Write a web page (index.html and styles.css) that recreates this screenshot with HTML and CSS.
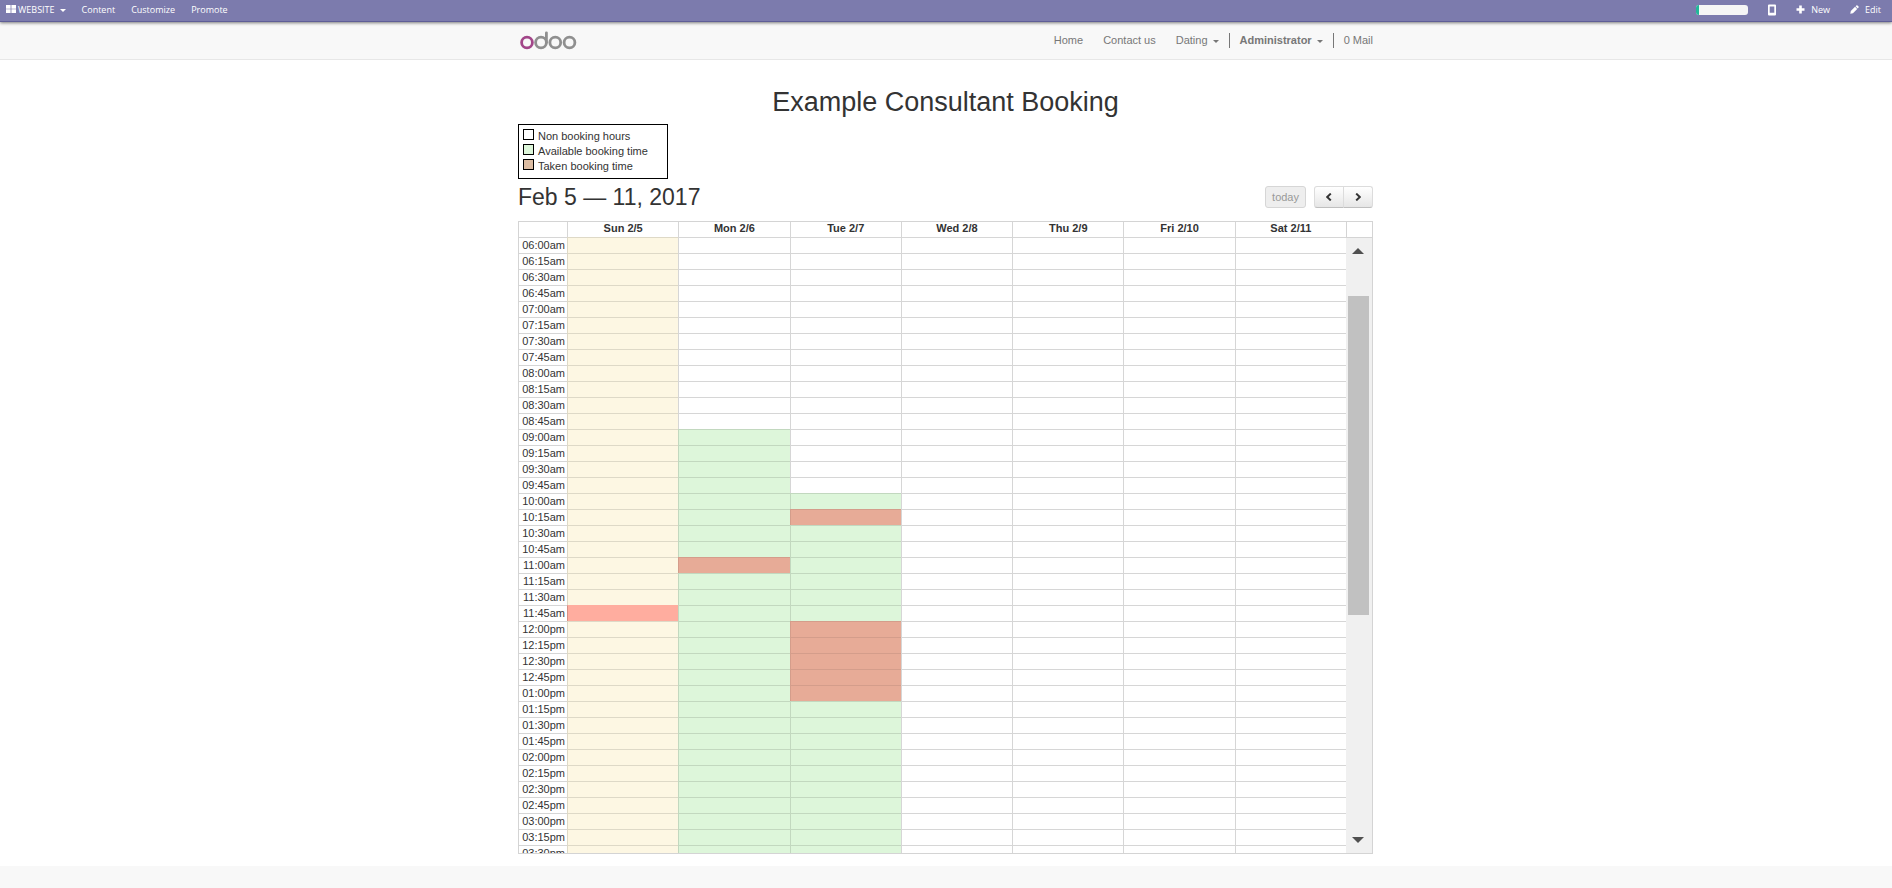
FILE: index.html
```html
<!DOCTYPE html>
<html lang="en">
<head>
<meta charset="utf-8">
<title>Example Consultant Booking</title>
<link rel="stylesheet" href="styles.css">
</head>
<body>
<nav class="topbar" aria-label="Website editor">
  <ul class="topbar-list">
    <li><a href="#" class="topbar-brand"><svg class="icon-grid" viewBox="0 0 10 8" aria-hidden="true"><path d="M0 0h4.6v3.7H0zM5.4 0H10v3.7H5.4zM0 4.3h4.6V8H0zM5.4 4.3H10V8H5.4z"/></svg>WEBSITE<span class="caret"></span></a></li>
    <li><a href="#">Content</a></li>
    <li><a href="#">Customize</a></li>
    <li><a href="#">Promote</a></li>
  </ul>
  <ul class="topbar-list topbar-actions">
    <li class="progress"><span class="progress-bar"></span></li>
    <li><button type="button" aria-label="Mobile preview"><svg class="icon-mobile" viewBox="0 0 8 12" aria-hidden="true"><path fill-rule="evenodd" d="M1 .5h6q1 0 1 1v9q0 1-1 1H1q-1 0-1-1v-9q0-1 1-1zM1.7 2.4v6.400h4.600v-6.400z"/></svg></button></li>
    <li><button type="button"><svg class="icon" viewBox="0 0 9 9" aria-hidden="true"><path d="M3.2.5h2.6v2.7h2.7v2.6H5.800v2.700H3.200V5.800H.5V3.200h2.700z"/></svg>New</button></li>
    <li><button type="button"><svg class="icon" viewBox="0 0 10 10" aria-hidden="true"><path d="M.3 9.700l.6-3L5.600 2l2.400 2.400L3.300 9.100zM6.200 1.400l.9-.9q.6-.5 1.200 0L9.500 1.700q.5.600 0 1.200l-.9.900z"/></svg>Edit</button></li>
  </ul>
</nav>

<header class="site-header">
  <div class="container header-row">
    <a href="#" class="logo" aria-label="odoo">
      <svg viewBox="0 0 57 19" fill="none" stroke-width="2.800">
        <g stroke="#8f8f8f"><circle cx="21" cy="11.500" r="5.400"/><path d="M26.400 11.500V1.800" stroke-linecap="round"/><circle cx="35.300" cy="11.500" r="5.400"/><circle cx="49.500" cy="11.500" r="5.400"/></g>
        <circle cx="7" cy="11.500" r="5.400" stroke="#a24689"/>
      </svg>
    </a>
    <nav aria-label="Main">
      <ul class="menu">
        <li><a href="#">Home</a></li>
        <li><a href="#">Contact us</a></li>
        <li><a href="#">Dating<span class="caret"></span></a></li>
        <li class="divided"><a href="#" class="user">Administrator<span class="caret"></span></a></li>
        <li class="divided"><a href="#">0 Mail</a></li>
      </ul>
    </nav>
  </div>
</header>

<main class="main">
  <h1>Example Consultant Booking</h1>
  <ul class="legend">
    <li><span class="swatch"></span>Non booking hours</li>
    <li><span class="swatch swatch-open"></span>Available booking time</li>
    <li><span class="swatch swatch-taken"></span>Taken booking time</li>
  </ul>
  <div class="toolbar">
    <h2>Feb 5 — 11, 2017</h2>
    <div class="toolbar-buttons">
      <button type="button" class="btn btn-today" disabled>today</button>
      <div class="btn-group">
        <button type="button" class="btn btn-step" aria-label="Previous week"><svg viewBox="0 0 6 8" aria-hidden="true"><path d="M4.800.6L1.200 4l3.600 3.400"/></svg></button>
        <button type="button" class="btn btn-step" aria-label="Next week"><svg viewBox="0 0 6 8" aria-hidden="true"><path d="M1.200.6L4.800 4 1.200 7.400"/></svg></button>
      </div>
    </div>
  </div>
  <section class="calendar" aria-label="Week">
    <div class="viewport">
      <table class="slots">
        <thead>
          <tr><th class="axis"></th><th>Sun 2/5</th><th>Mon 2/6</th><th>Tue 2/7</th><th>Wed 2/8</th><th>Thu 2/9</th><th>Fri 2/10</th><th>Sat 2/11</th></tr>
        </thead>
        <tbody id="slots"></tbody>
      </table>
    </div>
    <div class="scroll-column">
      <div class="scroll-head"></div>
      <div class="scrollbar">
        <span class="arrow arrow-up"></span>
        <span class="thumb"></span>
        <span class="arrow arrow-down"></span>
      </div>
    </div>
  </section>
</main>
<script src="calendar.js"></script>
</body>
</html>
```
FILE: styles.css
```css
* { box-sizing: border-box; }

body {
  margin: 0;
  min-height: 100vh;
  background: #f8f8f8;
  color: #333;
  font: 11px/15px "Liberation Sans", Arial, sans-serif;
}

h1, h2, ul { margin: 0; padding: 0; font-weight: 400; }
ul { list-style: none; }
a { color: inherit; text-decoration: none; }
button { font: inherit; color: inherit; }

.container {
  width: 100%;
  max-width: 880px;
  margin: 0 auto;
  padding: 0 12px;
}

.caret {
  display: inline-block;
  margin-left: 5px;
  border: 3px solid transparent;
  border-top-color: currentColor;
  border-bottom: 0;
  vertical-align: middle;
}

.topbar {
  position: relative;
  display: flex;
  justify-content: space-between;
  height: 22px;
  padding: 0 11px 0 6px;
  border-bottom: 1px solid #5f5e97;
  background: #7c7bad;
  box-shadow: 0 1px 3px rgba(0, 0, 0, .5);
  color: #fff;
  font: 600 9px/19px "Open Sans", "Noto Sans", sans-serif;
}
.topbar-list { display: flex; gap: 16px; }
.topbar-brand { font-weight: 400; }
.topbar-actions { gap: 20px; align-items: center; height: 19px; }
.topbar button {
  display: flex;
  align-items: center;
  padding: 0;
  border: 0;
  background: none;
}
.topbar svg { fill: #fff; }
.icon-grid { width: 10px; height: 8px; margin-right: 2px; }
.icon-mobile { width: 8px; height: 12px; }
.icon { width: 9px; height: 9px; margin-right: 6px; }
.progress {
  display: flex;
  width: 52px;
  height: 10px;
  overflow: hidden;
  border-radius: 3px;
  background: #f5f5f5;
}
.progress-bar { width: 3px; background: #21b799; }

.site-header { border-bottom: 1px solid #e7e7e7; }
.header-row {
  display: flex;
  justify-content: space-between;
  align-items: center;
  height: 37px;
}
.logo svg { display: block; width: 57px; height: 19px; margin-left: 2px; }
.menu { display: flex; color: #777; }
.menu a { display: block; padding: 0 10px; }
.menu li:last-child a { padding-right: 1px; }
.divided { border-left: 1px solid #777; }
.user { font-weight: 700; }

.main {
  padding: 26px calc(50% - 427px) 12px calc(50% - 428px);
  background: #fff;
}
h1 { font-size: 27px; line-height: 32px; text-align: center; }

.legend {
  width: 150px;
  margin-top: 6px;
  padding: 4px;
  border: 1px solid #000;
}
.legend li { display: flex; align-items: center; gap: 4px; height: 15px; }
.swatch { width: 11px; height: 11px; margin-bottom: 4px; border: 1px solid #000; }
.swatch-open { background: #ddf6da; }
.swatch-taken { background: #ddbda3; }

.toolbar {
  display: flex;
  justify-content: space-between;
  align-items: center;
  height: 42px;
}
h2 { font-size: 23px; line-height: 26px; margin-bottom: 6px; }
.toolbar-buttons { display: flex; gap: 8px; margin-bottom: 6px; }
.btn-group { display: flex; }
.btn {
  height: 22px;
  padding: 0 6px;
  border: 1px solid #ccc;
  border-color: #dcdcdc #dcdcdc #bfbfbf;
  border-radius: 3px;
  background: linear-gradient(#fff, #e6e6e6);
}
.btn-today { background: #eee; color: #999; border-color: #d6d6d6; }
.btn-step { display: flex; align-items: center; justify-content: center; width: 30px; }
.btn-step:first-child { border-radius: 3px 0 0 3px; }
.btn-step:last-child { margin-left: -1px; border-radius: 0 3px 3px 0; }
.btn-step svg { width: 6px; height: 8px; fill: none; stroke: #333; stroke-width: 2; }

.calendar { display: flex; height: 633px; border: 1px solid #d4d4d4; }
.viewport { flex: 1; overflow: hidden; }
.slots {
  width: 100%;
  table-layout: fixed;
  border-spacing: 0;
}
.slots th, .slots td {
  height: 16px;
  padding: 0;
  border-left: 1px solid rgba(0, 0, 0, .16);
  border-top: 1px solid rgba(0, 0, 0, .16);
}
.slots thead th { height: 15px; border-top: 0; line-height: 13px; vertical-align: top; }
.slots tr th:first-child { border-left: 0; }
.slots .axis { width: 48px; }
.slots tbody th {
  padding-right: 2px;
  font-weight: 400;
  line-height: 15px;
  text-align: right;
}
.slots .today { background: #fdf7e3; border-color: rgba(0, 0, 0, .12); }
.slots .open { background: #ddf6da; border-color: rgba(0, 0, 0, .12); }
.slots .taken { background: #e7ab97; border-color: rgba(0, 0, 0, .08); }
.slots .taken-today { background: #ffad9f; border-top-color: transparent; }

.scroll-column { display: flex; flex-direction: column; width: 26px; }
.scroll-head {
  height: 16px;
  border-left: 1px solid #d4d4d4;
  border-bottom: 1px solid #d4d4d4;
}
.scrollbar {
  display: flex;
  flex: 1;
  flex-direction: column;
  align-items: center;
  padding: 10px 3px 10px 1px;
  background: #f0f0f0;
}
.arrow { border: 6px solid transparent; }
.arrow-up { border-top: 0; border-bottom-color: #505050; }
.arrow-down { margin-top: auto; border-bottom: 0; border-top-color: #505050; }
.thumb { width: 21px; height: 319px; margin-top: 42px; background: #c1c1c1; }
```
FILE: calendar.js
```js
// Quarter-hour slots, counted in minutes from midnight.
const START = 6 * 60, STEP = 15, ROWS = 39;
const open = [null, [540, 1440], [600, 1440]];
const taken = [[[705, 720]], [[660, 675]], [[615, 630], [720, 795]]];
const within = (t, range) => t >= range[0] && t < range[1];

function slotClass(day, t) {
  const busy = (taken[day] || []).some(range => within(t, range));
  if (busy) return day === 0 ? 'taken-today' : 'taken';
  if (day === 0) return 'today';
  return open[day] && within(t, open[day]) ? 'open' : '';
}

function label(t) {
  const hour = Math.floor(t / 60);
  const pad = n => String(n).padStart(2, '0');
  return pad(hour % 12 || 12) + ':' + pad(t % 60) + (hour < 12 ? 'am' : 'pm');
}

const body = document.getElementById('slots');
for (let i = 0; i < ROWS; i++) {
  const t = START + i * STEP;
  const row = body.insertRow();
  const head = document.createElement('th');
  head.scope = 'row';
  head.textContent = label(t);
  row.append(head);
  for (let day = 0; day < 7; day++) row.insertCell().className = slotClass(day, t);
}
```
